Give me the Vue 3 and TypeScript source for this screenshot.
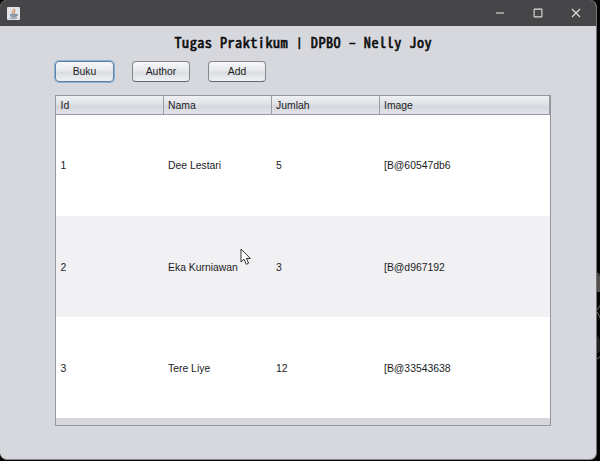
<script setup lang="ts">
interface Row { id: number; nama: string; jumlah: number; image: string }
const columns: string[] = ['Id', 'Nama', 'Jumlah', 'Image']
const rows: Row[] = [
  { id: 1, nama: 'Dee Lestari', jumlah: 5, image: '[B@60547db6' },
  { id: 2, nama: 'Eka Kurniawan', jumlah: 3, image: '[B@d967192' },
  { id: 3, nama: 'Tere Liye', jumlah: 12, image: '[B@33543638' },
]
</script>

<template>
  <main class="desktop">
    <svg class="backdrop" width="4" height="92" viewBox="0 0 4 92">
      <path d="M0 2L4 5V20H0Z" fill="#55524d" />
      <path d="M0 1L4 4M0 38L4 32M0 40L4 47M0 87L4 84" stroke="#777" fill="none" />
      <path d="M0 62L4 70V78L0 82Z" fill="#222" />
    </svg>
    <section class="window">
      <header class="titlebar">
        <svg class="java" width="13" height="13" viewBox="0 0 13 13">
          <rect width="13" height="13" rx="1" fill="#e3e6e9" />
          <path d="M7.5 1.5C8 3 4.5 3.7 5.2 5.2L6.3 6.6M8.8 3.5C6.5 4.3 7.5 5 7.3 6.5" fill="none" stroke="#d98a5a" stroke-width="1.1" />
          <path d="M3.5 7.3H9V9Q8.5 10 6.5 10Q4 10 3.5 8.5ZM9 7.5Q11 7.2 10.5 8.3Q10 9.2 8.8 9M2.5 11Q6.5 12 10.5 10.8" fill="#8fa2b2" stroke="#708797" stroke-width=".8" />
        </svg>
        <div class="controls">
          <svg width="10" height="10" viewBox="0 0 10 10"><path d="M1 5H9" /></svg>
          <svg width="10" height="10" viewBox="0 0 10 10"><rect x="1.1" y="1.1" width="7.8" height="7.8" rx=".5" /></svg>
          <svg width="10" height="10" viewBox="0 0 10 10"><path d="M1 1L9 9M9 1L1 9" /></svg>
        </div>
      </header>
      <div class="content">
        <h1>Tugas Praktikum <span class="bar">|</span> DPBO <span class="dash">-</span> Nelly Joy</h1>
        <nav>
          <button class="focused">Buku</button>
          <button>Author</button>
          <button>Add</button>
        </nav>
        <div class="table">
          <div class="row head">
            <div v-for="c in columns" :key="c">{{ c }}</div>
          </div>
          <div v-for="r in rows" :key="r.id" class="row body">
            <div>{{ r.id }}</div>
            <div>{{ r.nama }}</div>
            <div>{{ r.jumlah }}</div>
            <div>{{ r.image }}</div>
          </div>
        </div>
      </div>
    </section>
    <svg class="cursor" width="12" height="18" viewBox="0 0 12 18">
      <path d="M1 1V14L4 11.2L6.3 16.3L8.6 15.2L6.4 10.5H10.4Z" fill="#fff" stroke="#333" stroke-width="1" />
    </svg>
  </main>
</template>

<style>
body { margin: 0; background: #000; overflow: hidden; }
</style>
<style scoped>
* { box-sizing: border-box; }
.desktop { position: relative; width: 600px; height: 461px; background: #050505; overflow: hidden; font-family: "Liberation Sans", sans-serif; font-size: 10.4px; color: #1c1c1e; }
.backdrop { position: absolute; left: 597px; top: 272px; }
.window { width: 597px; height: 460px; border-radius: 7px; overflow: hidden; background: #d6d8de; border-right: 1px solid #73757a; border-bottom: 1px solid #85878b; }
.titlebar { height: 26px; background: #464547; display: flex; align-items: center; justify-content: space-between; padding: 0 15px 0 7px; }
.controls { display: flex; gap: 28px; }
.controls svg { fill: none; stroke: #dededf; stroke-width: 1.1; }
.content { padding: 7px 45px 0 55px; }
h1 { margin: 0; height: 18px; padding-left: 119.5px; font: normal 14.2px/18px "Noto Sans Mono CJK JP", "DejaVu Sans Mono", monospace; letter-spacing: .48px; color: #0c0c0c; white-space: pre; -webkit-text-stroke: .6px #0c0c0c; }
.bar { display: inline-block; transform: scaleY(.72); }
.dash { display: inline-block; transform: scaleX(1.3); }
nav { display: flex; gap: 18px; margin-top: 10px; }
button { width: 58px; height: 21px; padding: 0; font: inherit; color: inherit; border: 1px solid #85888e; border-bottom-color: #62656c; border-radius: 4px; background: linear-gradient(#f8f8fa, #e5e7eb 48%, #d9dce1 52%, #eff1f4); }
button.focused { width: 59px; border-color: #5781a9; box-shadow: 0 0 0 1px #8eb0d0; }
button:not(.focused) { margin-left: 0; }
.table { margin-top: 13px; width: 496px; height: 331px; border: 1px solid #94979d; background: #d6d8de; }
.row { display: grid; grid-template-columns: 107.5px 108px 108px 1fr; }
.head { height: 19px; line-height: 19px; background: linear-gradient(#f0f1f4, #e0e2e7 45%, #d4d7dc 55%, #e1e3e8); border-bottom: 1px solid #989ba1; }
.head div { border-right: 1px solid #999ca2; }
.row div { padding-left: 4.5px; }
.body { height: 101.15px; padding-top: .7px; align-items: center; background: #fff; }
.body:nth-child(odd) { background: #f1f0f3; }
.cursor { position: absolute; left: 240px; top: 248px; }
</style>
